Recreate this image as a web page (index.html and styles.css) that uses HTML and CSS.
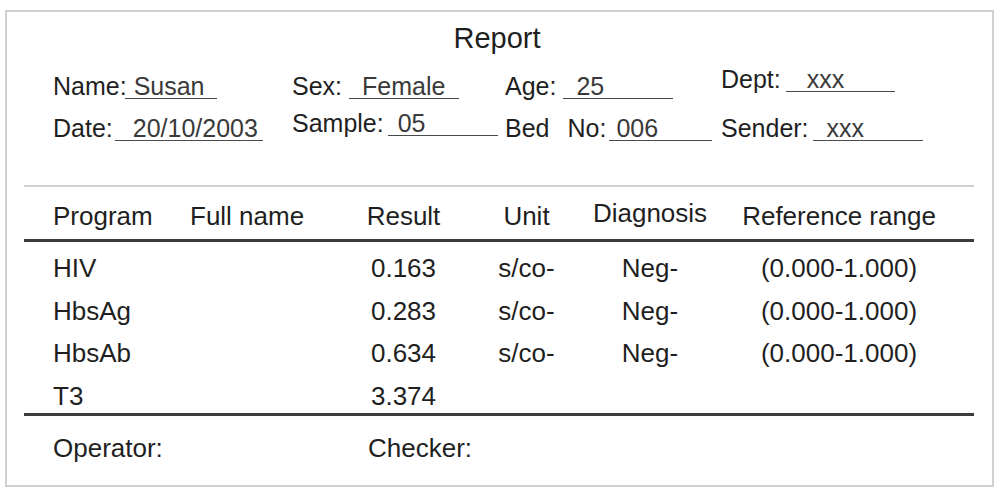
FILE: index.html
```html
<!DOCTYPE html>
<html lang="en">
<head>
<meta charset="utf-8">
<title>Report</title>
<link rel="stylesheet" href="styles.css">
</head>
<body>
<div class="report">
  <h1 class="title">Report</h1>
  <div class="info">
    <div class="field f-name"><span class="lbl">Name:</span><span class="val">Susan</span></div>
    <div class="field f-sex"><span class="lbl">Sex:</span><span class="val">Female</span></div>
    <div class="field f-age"><span class="lbl">Age:</span><span class="val">25</span></div>
    <div class="field f-dept"><span class="lbl">Dept:</span><span class="val">xxx</span></div>
    <div class="field f-date"><span class="lbl">Date:</span><span class="val">20/10/2003</span></div>
    <div class="field f-sample"><span class="lbl">Sample:</span><span class="val">05</span></div>
    <div class="field f-bed"><span class="lbl">Bed</span><span class="lbl no">No:</span><span class="val">006</span></div>
    <div class="field f-sender"><span class="lbl">Sender:</span><span class="val">xxx</span></div>
  </div>
  <div class="rule-thin"></div>
  <div class="grid-row head">
    <div class="c-left">Program</div>
    <div class="c-left">Full name</div>
    <div class="c-mid">Result</div>
    <div class="c-mid">Unit</div>
    <div class="c-mid diag">Diagnosis</div>
    <div class="c-mid">Reference range</div>
  </div>
  <div class="rule-thick"></div>
  <div class="rows">
    <div class="grid-row data">
      <div class="c-left">HIV</div><div class="c-left"></div>
      <div class="c-mid">0.163</div><div class="c-mid">s/co-</div>
      <div class="c-mid">Neg-</div><div class="c-mid">(0.000-1.000)</div>
    </div>
    <div class="grid-row data">
      <div class="c-left">HbsAg</div><div class="c-left"></div>
      <div class="c-mid">0.283</div><div class="c-mid">s/co-</div>
      <div class="c-mid">Neg-</div><div class="c-mid">(0.000-1.000)</div>
    </div>
    <div class="grid-row data">
      <div class="c-left">HbsAb</div><div class="c-left"></div>
      <div class="c-mid">0.634</div><div class="c-mid">s/co-</div>
      <div class="c-mid">Neg-</div><div class="c-mid">(0.000-1.000)</div>
    </div>
    <div class="grid-row data">
      <div class="c-left">T3</div><div class="c-left"></div>
      <div class="c-mid">3.374</div><div class="c-mid"></div>
      <div class="c-mid"></div><div class="c-mid"></div>
    </div>
  </div>
  <div class="rule-thick"></div>
  <div class="footer">
    <div class="operator">Operator:</div>
    <div class="checker">Checker:</div>
  </div>
</div>
</body>
</html>
```
FILE: styles.css
```css
html, body {
  margin: 0;
  padding: 0;
  background: #ffffff;
}
body {
  font-family: "Liberation Sans", Arial, sans-serif;
  font-size: 25px;
  color: #1f1f1f;
}
.report {
  box-sizing: border-box;
  margin: 10px 0 0 5px;
  width: 989px;
  height: 477px;
  border: 2px solid #d0d0d0;
  padding: 0 18px 0 17px;
}
.title {
  margin: 8px 0 0 0;
  font-size: 29px;
  font-weight: normal;
  line-height: 36px;
  text-align: center;
  padding-right: 4px;
}
.info {
  margin-top: 9px;
  padding-left: 29px;
  display: grid;
  grid-template-columns: 239px 213px 216px 1fr;
}
.field {
  line-height: 42px;
  white-space: nowrap;
}
.val {
  display: inline-block;
  box-sizing: border-box;
  line-height: 0.9;
  border-bottom: 1.5px solid #4a4a4a;
  color: #3a3a3a;
}
.f-name .val { margin-left: -2px; width: 92px; padding-left: 9px; }
.f-sex .val { margin-left: 7px; width: 110px; padding-left: 13px; }
.f-age .val { margin-left: 7px; width: 110px; padding-left: 13px; }
.f-dept { margin-top: -7px; }
.f-dept .val { margin-left: 5px; width: 109px; padding-left: 21px; }
.f-date .val { margin-left: 2px; width: 148px; padding-left: 18px; }
.f-sample { margin-top: -5px; }
.f-sample .val { margin-left: 4px; width: 110px; padding-left: 10px; }
.f-bed .no { margin-left: 18px; }
.f-bed .val { margin-left: 3px; width: 103px; padding-left: 7px; }
.f-sender .val { margin-left: 4px; width: 110px; padding-left: 14px; }

.rule-thin {
  margin-top: 36px;
  height: 2px;
  background: #d2d2d2;
}
.rule-thick {
  height: 3px;
  background: #3c3c3c;
}
.grid-row {
  display: grid;
  grid-template-columns: 137px 150px 127px 119px 128px 250px;
  padding-left: 29px;
  white-space: nowrap;
  font-size: 26px;
}
.c-left { text-align: left; }
.c-mid { text-align: center; }
.head {
  padding-top: 7px;
  line-height: 45px;
}
.head .diag { margin-top: -3px; }
.rows {
  padding-top: 1px;
}
.data {
  padding-top: 9px;
  line-height: 33.5px;
}
.footer {
  display: flex;
  padding: 11px 0 0 29px;
  line-height: 42px;
  font-size: 26px;
}
.operator { width: 315px; }
```
